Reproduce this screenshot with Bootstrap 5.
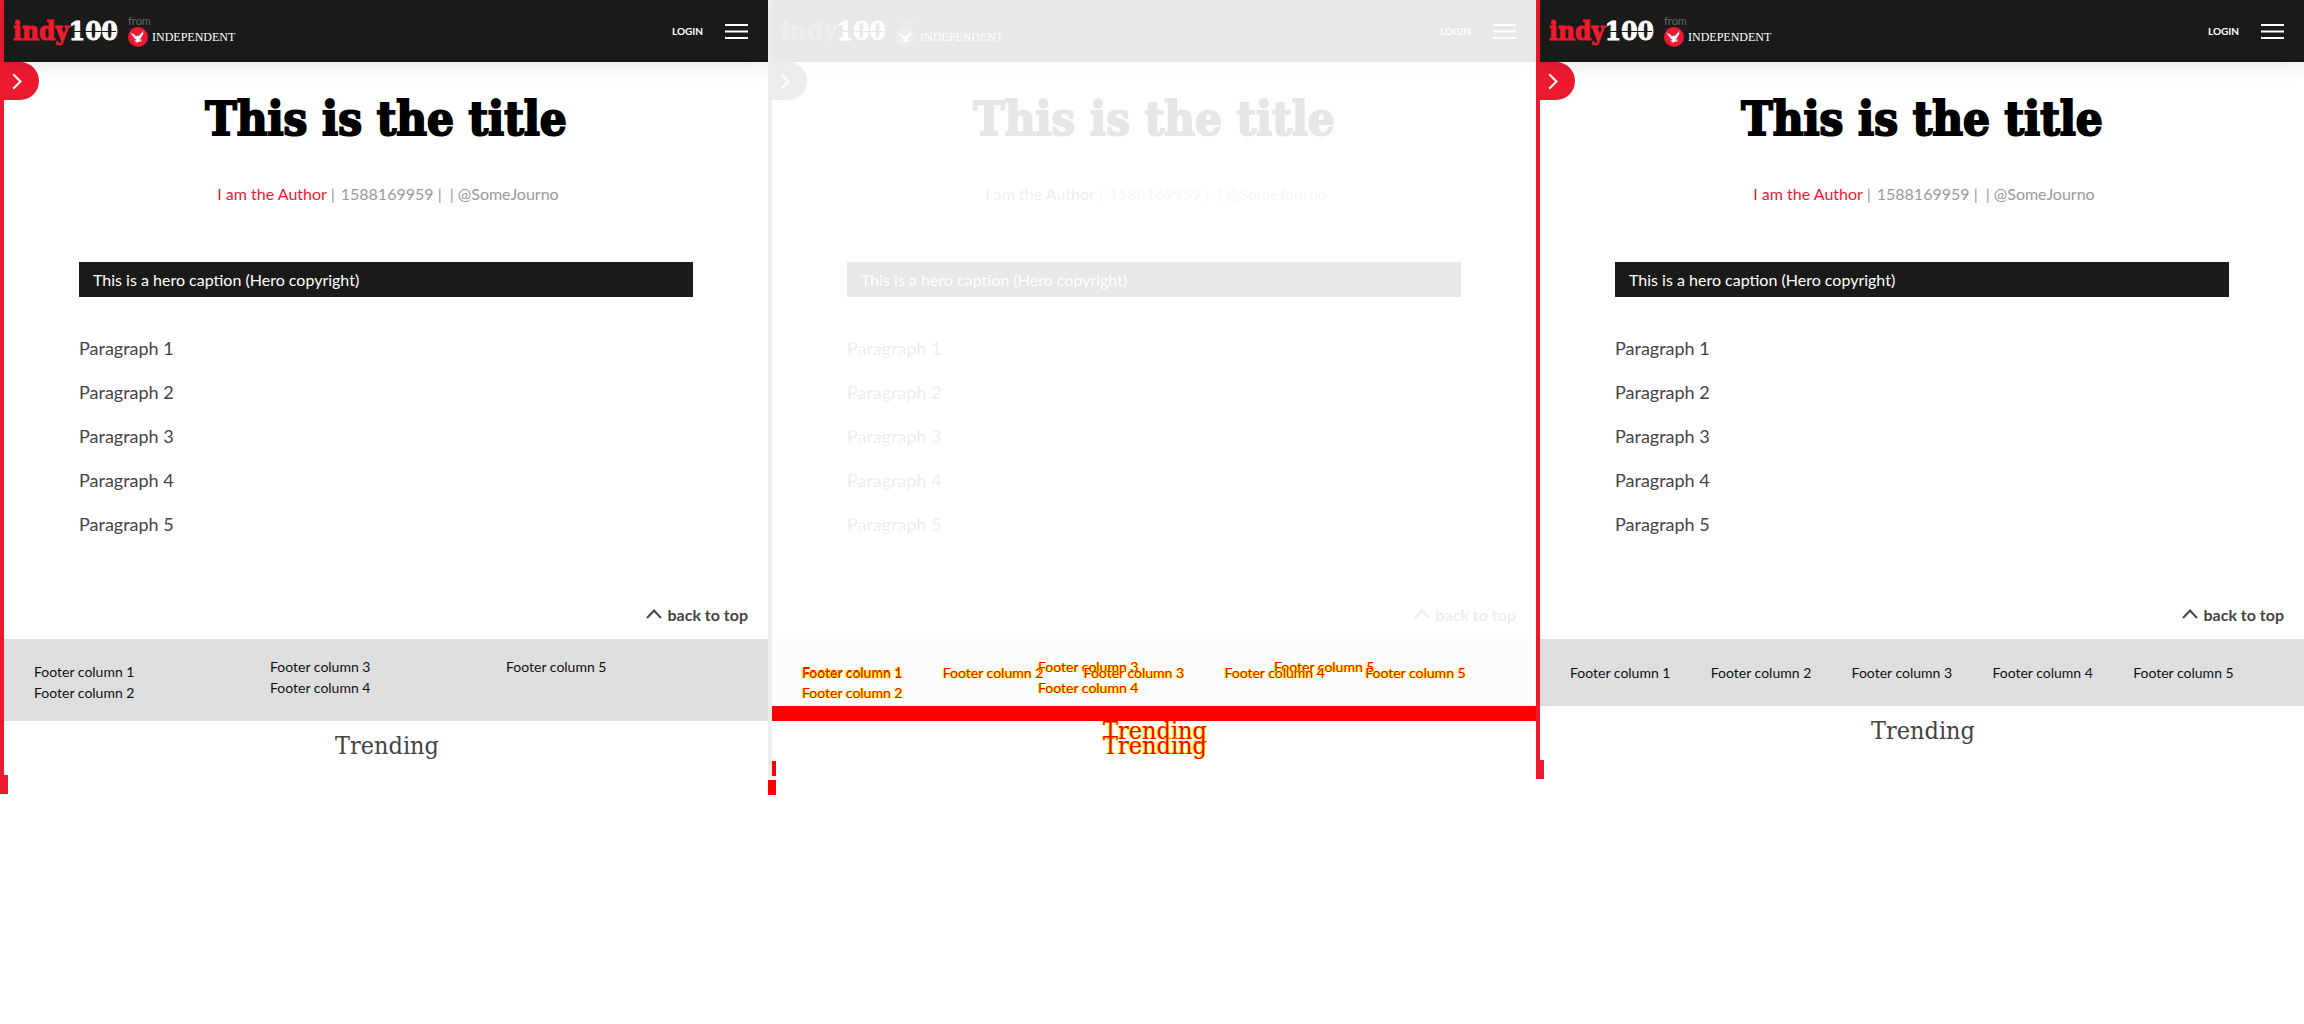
<!DOCTYPE html>
<html lang="en">
<head>
<meta charset="utf-8">
<meta name="viewport" content="width=device-width, initial-scale=1">
<title>indy100 article comparison</title>
<link href="https://cdn.jsdelivr.net/npm/bootstrap@5.3.0/dist/css/bootstrap.min.css" rel="stylesheet">
<script src="https://cdn.jsdelivr.net/npm/bootstrap@5.3.0/dist/js/bootstrap.bundle.min.js"></script>
<style>
body{font-family:Lato,sans-serif;color:#444;background:#fff;line-height:20px}
.shot{overflow:hidden}
.stripe{border-left:4px solid #ed1a2f}
.stub{width:8px;height:19px;background:#ed1a2f}
.topbar{height:62px;background:#1a1a1a;padding:0 20px 0 9px;box-shadow:0 4px 20px rgba(0,0,0,.1);z-index:2}
.indy{font:bold 26px/30px "DejaVu Serif Condensed","DejaVu Serif",serif;font-stretch:condensed;color:#ed1a2f;-webkit-text-stroke:1px #ed1a2f;width:103px}
.hundred{color:#fff;-webkit-text-stroke:1px #fff}
.indy::after{content:"";position:absolute;left:58px;right:0;top:15px;height:1px;background:#1a1a1a}
.from-label{font-size:11px;line-height:12px;color:#666}
.indep{font:12px/20px "Liberation Serif",serif;color:#fff}
.login{font-size:10px;font-weight:700;color:#fff}
.menu-links{gap:22px}
.sidetab{left:-4px;top:62px;width:39px;height:38px;background:#ed1a2f;border:0;border-radius:0 19px 19px 0;padding:0 0 0 12px}
.headline{font:bold 47px/56px "DejaVu Serif Condensed","DejaVu Serif",serif;font-stretch:condensed;color:#000;-webkit-text-stroke:2px #000;padding-top:29px;margin:0}
.byline{font-size:16px;color:#999;padding:37px 0 0 4px}
.byline a{color:#ed1a2f}
.stamp{margin-left:2px}
.gapbar{margin-left:4px}
.story{padding:58px 75px 0}
.hero-cap{background:#1a1a1a;color:#fff;font-size:16px;line-height:35px;padding-left:14px;margin-bottom:37px}
.story p{font-size:18px;line-height:28px;margin-bottom:16px}
.totop{padding:51px 20px 14px 0}
.totop a{font-size:16px;font-weight:700;color:#444;gap:6px}
.foot{background:#dedede;color:#111;font-size:14px;line-height:21px;padding:0 30px}
.foot-three{height:82px;padding-top:17px;padding-right:26px}
.foot-three ul:first-child{padding-top:5px}
.foot-five{height:67px;padding-top:23px}
.trend{font:25px/30px "DejaVu Serif Condensed","DejaVu Serif",serif;font-stretch:condensed;padding:10px 0 14px 2px;margin:0}
.faded{filter:grayscale(1) opacity(.1)}
.diffzone{border-left:4px solid #ededed;background:#fff}
.stack > *{grid-area:1/1}
.pale{background:#fcfcfc;height:67px}
.hot,.hot .foot{background:none;color:#f00;text-shadow:1px 0 #ff0,-1px 0 #ff0}
.redbar{height:15px;background:#f00}
.lower{margin-top:15px}
.ghost-stub{width:8px;height:19px;background:#ededed;padding-left:4px}
.ghost-stub div,.red-stub{height:15px;background:#f00}
.red-stub{width:8px}
</style>
</head>
<body>
<svg class="d-none" aria-hidden="true">
 <symbol id="eagle" viewBox="0 0 20 20"><circle cx="10" cy="10" r="10" fill="#ed1a2f"/><path fill="#fff" d="M2 5.500l3.500 1.600 2.800 2.300 1.300-.8 1.300.4L12.500 7l3-3.200-.6 2.200.8-.4-1.300 3-1.500 2.500-1.200 1.500 2.800.4-2.300.8 1.700 1.300-2.600-.5-2.400 1.500-.2-1-2.300.6 2.200-1.800-2.500.1 2.200-1.500-2.300-.8 1.300-.2-2.500-1.800 1.300.1L3.500 8l1 .1z"/></symbol>
 <symbol id="bars" viewBox="0 0 23 15"><path fill="#fff" d="M0 0h23v2H0zM0 6.500h23v2H0zM0 13h23v2H0z"/></symbol>
 <symbol id="chev" viewBox="0 0 10 17"><path d="M1.200 1.200L8.500 8.500 1.200 15.800" fill="none" stroke="#fff" stroke-width="2"/></symbol>
 <symbol id="up" viewBox="0 0 16 10"><path d="M1 9L8 1.500 15 9" fill="none" stroke="#444" stroke-width="2"/></symbol>
</svg>
<div class="row g-0">

<section class="col-4 shot">
 <div class="stripe position-relative">
  <header class="topbar position-relative d-flex align-items-center justify-content-between">
   <div class="d-flex align-items-center">
    <a href="#" class="indy position-relative text-decoration-none text-nowrap">indy<span class="hundred">100</span></a>
    <div class="ms-2 ps-1"><div class="from-label">from</div>
     <div class="d-flex align-items-center gap-1"><svg width="20" height="20"><use href="#eagle"/></svg><span class="indep">INDEPENDENT</span></div></div>
   </div>
   <div class="menu-links d-flex align-items-center"><a href="#" class="login text-decoration-none">LOGIN</a>
    <button class="btn p-0 border-0 d-flex" aria-label="Menu"><svg width="23" height="15"><use href="#bars"/></svg></button></div>
  </header>
  <button class="sidetab position-absolute d-flex align-items-center" aria-label="Open"><svg width="10" height="17"><use href="#chev"/></svg></button>
  <h1 class="headline text-center">This is the title</h1>
  <div class="byline text-center"><a href="#" class="text-decoration-none">I am the Author</a> | <span class="stamp">1588169959</span> | <span class="gapbar">|</span> @SomeJourno</div>
  <main class="story">
   <div class="hero-cap">This is a hero caption (Hero copyright)</div>
   <p>Paragraph 1</p><p>Paragraph 2</p><p>Paragraph 3</p><p>Paragraph 4</p><p>Paragraph 5</p>
  </main>
  <div class="totop d-flex justify-content-end"><a href="#" class="d-flex text-decoration-none"><svg class="mt-1" width="16" height="10"><use href="#up"/></svg>back to top</a></div>
  <footer class="foot foot-three d-flex">
   <ul class="list-unstyled col-4 mb-0"><li>Footer column 1</li><li>Footer column 2</li></ul>
   <ul class="list-unstyled col-4 mb-0"><li>Footer column 3</li><li>Footer column 4</li></ul>
   <ul class="list-unstyled col-4 mb-0"><li>Footer column 5</li></ul>
  </footer>
  <h2 class="trend text-center">Trending</h2>
 </div>
 <div class="stub"></div>
</section>

<section class="col-4 shot">
 <div class="faded"><div class="stripe position-relative">
  <header class="topbar position-relative d-flex align-items-center justify-content-between">
   <div class="d-flex align-items-center">
    <a href="#" class="indy position-relative text-decoration-none text-nowrap">indy<span class="hundred">100</span></a>
    <div class="ms-2 ps-1"><div class="from-label">from</div>
     <div class="d-flex align-items-center gap-1"><svg width="20" height="20"><use href="#eagle"/></svg><span class="indep">INDEPENDENT</span></div></div>
   </div>
   <div class="menu-links d-flex align-items-center"><a href="#" class="login text-decoration-none">LOGIN</a>
    <button class="btn p-0 border-0 d-flex" aria-label="Menu"><svg width="23" height="15"><use href="#bars"/></svg></button></div>
  </header>
  <button class="sidetab position-absolute d-flex align-items-center" aria-label="Open"><svg width="10" height="17"><use href="#chev"/></svg></button>
  <h1 class="headline text-center">This is the title</h1>
  <div class="byline text-center"><a href="#" class="text-decoration-none">I am the Author</a> | <span class="stamp">1588169959</span> | <span class="gapbar">|</span> @SomeJourno</div>
  <main class="story">
   <div class="hero-cap">This is a hero caption (Hero copyright)</div>
   <p>Paragraph 1</p><p>Paragraph 2</p><p>Paragraph 3</p><p>Paragraph 4</p><p>Paragraph 5</p>
  </main>
  <div class="totop d-flex justify-content-end"><a href="#" class="d-flex text-decoration-none"><svg class="mt-1" width="16" height="10"><use href="#up"/></svg>back to top</a></div>
 </div></div>
 <div class="diffzone">
  <div class="pale"><div class="d-grid stack hot">
   <div class="foot foot-three d-flex pb-0">
    <ul class="list-unstyled col-4 mb-0"><li>Footer column 1</li><li>Footer column 2</li></ul>
    <ul class="list-unstyled col-4 mb-0"><li>Footer column 3</li><li>Footer column 4</li></ul>
    <ul class="list-unstyled col-4 mb-0"><li>Footer column 5</li></ul>
   </div>
   <div class="foot foot-five d-flex"><div class="w-100">Footer column 1</div><div class="w-100">Footer column 2</div><div class="w-100">Footer column 3</div><div class="w-100">Footer column 4</div><div class="w-100">Footer column 5</div></div>
  </div></div>
  <div class="d-grid stack">
   <div class="redbar"></div>
   <div class="trend hot text-center">Trending</div>
   <div class="trend hot lower text-center pb-0">Trending</div>
  </div>
 </div>
 <div class="ghost-stub"><div></div></div>
 <div class="red-stub"></div>
</section>

<section class="col-4 shot">
 <div class="stripe position-relative">
  <header class="topbar position-relative d-flex align-items-center justify-content-between">
   <div class="d-flex align-items-center">
    <a href="#" class="indy position-relative text-decoration-none text-nowrap">indy<span class="hundred">100</span></a>
    <div class="ms-2 ps-1"><div class="from-label">from</div>
     <div class="d-flex align-items-center gap-1"><svg width="20" height="20"><use href="#eagle"/></svg><span class="indep">INDEPENDENT</span></div></div>
   </div>
   <div class="menu-links d-flex align-items-center"><a href="#" class="login text-decoration-none">LOGIN</a>
    <button class="btn p-0 border-0 d-flex" aria-label="Menu"><svg width="23" height="15"><use href="#bars"/></svg></button></div>
  </header>
  <button class="sidetab position-absolute d-flex align-items-center" aria-label="Open"><svg width="10" height="17"><use href="#chev"/></svg></button>
  <h1 class="headline text-center">This is the title</h1>
  <div class="byline text-center"><a href="#" class="text-decoration-none">I am the Author</a> | <span class="stamp">1588169959</span> | <span class="gapbar">|</span> @SomeJourno</div>
  <main class="story">
   <div class="hero-cap">This is a hero caption (Hero copyright)</div>
   <p>Paragraph 1</p><p>Paragraph 2</p><p>Paragraph 3</p><p>Paragraph 4</p><p>Paragraph 5</p>
  </main>
  <div class="totop d-flex justify-content-end"><a href="#" class="d-flex text-decoration-none"><svg class="mt-1" width="16" height="10"><use href="#up"/></svg>back to top</a></div>
  <footer class="foot foot-five d-flex"><div class="w-100">Footer column 1</div><div class="w-100">Footer column 2</div><div class="w-100">Footer column 3</div><div class="w-100">Footer column 4</div><div class="w-100">Footer column 5</div></footer>
  <h2 class="trend text-center">Trending</h2>
 </div>
 <div class="stub"></div>
</section>
</div>
</body>
</html>
